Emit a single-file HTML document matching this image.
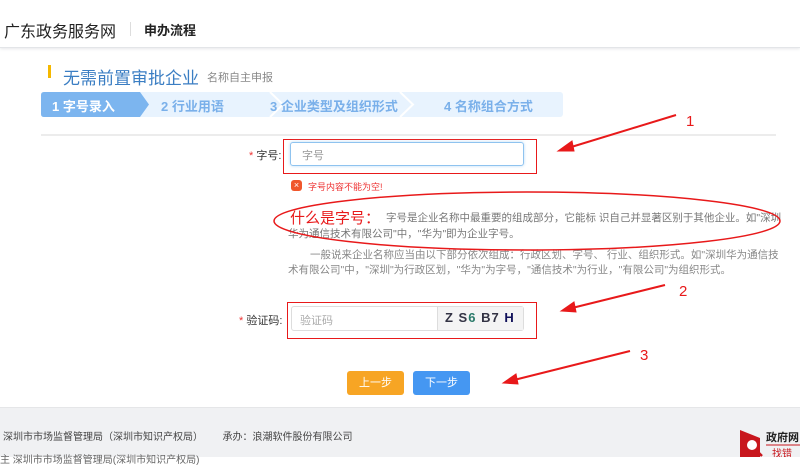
<!DOCTYPE html>
<html><head><meta charset="utf-8"><style>
*{margin:0;padding:0;box-sizing:border-box}
body{width:800px;height:457px;overflow:hidden;background:#fff;font-family:"Liberation Sans","Noto Sans CJK SC",sans-serif;position:relative;color:#333}
.a{position:absolute;white-space:nowrap}
</style></head><body>
<div class="a" style="left:0;top:0;width:800px;height:48px;background:#fff;border-bottom:1px solid #e3e5e8;box-shadow:0 1px 3px #e6e8ea"></div>
<div class="a" style="left:4px;top:18px;font-size:16px;color:#222">广东政务服务网</div>
<div class="a" style="left:130px;top:22px;width:1px;height:14px;background:#ddd"></div>
<div class="a" style="left:144px;top:20px;font-size:13px;font-weight:bold;color:#222">申办流程</div>
<div class="a" style="left:48px;top:65px;width:3px;height:13px;background:#f5b800"></div>
<div class="a" style="left:63px;top:64px;font-size:17px;color:#3b7ec3">无需前置审批企业</div>
<div class="a" style="left:207px;top:69px;font-size:11px;color:#888">名称自主申报</div>
<svg class="a" style="left:41px;top:92px" width="523" height="26">
<rect x="0" y="0" width="522" height="25" rx="3" fill="#e8f3fe"/>
<polyline points="229,0 242,12.5 229,25" fill="none" stroke="#fff" stroke-width="2"/>
<polyline points="359,0 372,12.5 359,25" fill="none" stroke="#fff" stroke-width="2"/>
<path d="M3,0 H99 L108,12.5 L99,25 H3 Q0,25 0,22 V3 Q0,0 3,0Z" fill="#7cb5ef"/>
</svg>
<div class="a" style="left:52px;top:96px;font-size:13px;font-weight:bold;color:#fff">1 字号录入</div>
<div class="a" style="left:161px;top:96px;font-size:13px;font-weight:bold;color:#7ab0ea">2 行业用语</div>
<div class="a" style="left:270px;top:96px;font-size:13px;font-weight:bold;color:#7ab0ea">3 企业类型及组织形式</div>
<div class="a" style="left:444px;top:96px;font-size:13px;font-weight:bold;color:#7ab0ea">4 名称组合方式</div>
<div class="a" style="left:41px;top:134px;width:735px;height:2px;background:#ececec"></div>
<div class="a" style="left:249px;top:147px;font-size:11px;color:#333"><span style="color:#e33">* </span>字号:</div>
<div class="a" style="left:283px;top:139px;width:254px;height:35px;border:1.5px solid #e8191a"></div>
<div class="a" style="left:290px;top:142px;width:234px;height:24px;border:1px solid #8fc3ef;border-radius:3px;box-shadow:0 0 3px #bcdcf6"></div>
<div class="a" style="left:302px;top:147px;font-size:11px;color:#999">字号</div>
<div class="a" style="left:291px;top:180px;width:11px;height:11px;border-radius:3px;background:#f0572c;color:#fff;font-size:9px;line-height:11px;text-align:center">×</div>
<div class="a" style="left:308px;top:180px;font-size:9px;color:#e33">字号内容不能为空!</div>
<div class="a" style="left:290px;top:207px;font-size:15px;color:#e8191a">什么是字号：</div>
<div class="a" style="left:386px;top:210px;font-size:10.5px;color:#777">字号是企业名称中最重要的组成部分，它能标 识自己并显著区别于其他企业。如"深圳</div>
<div class="a" style="left:288px;top:226px;font-size:10.5px;color:#777">华为通信技术有限公司"中，"华为"即为企业字号。</div>
<div class="a" style="left:310px;top:247px;font-size:10.5px;color:#888">一般说来企业名称应当由以下部分依次组成：行政区划、字号、 行业、组织形式。如"深圳华为通信技</div>
<div class="a" style="left:288px;top:262px;font-size:10.5px;color:#888">术有限公司"中，"深圳"为行政区划，"华为"为字号，"通信技术"为行业，"有限公司"为组织形式。</div>
<svg class="a" style="left:0;top:0" width="800" height="457">
<ellipse cx="527" cy="221" rx="253" ry="29" fill="none" stroke="#e8191a" stroke-width="1.5"/>
<g stroke="#e8191a" fill="#e8191a">
<line x1="676" y1="115" x2="568" y2="148" stroke-width="2"/><polygon points="558,151 572,141 574,151" />
<line x1="665" y1="285" x2="572" y2="308" stroke-width="2"/><polygon points="561,311 574,302 576,312"/>
<line x1="630" y1="351" x2="514" y2="380" stroke-width="2"/><polygon points="503,383 516,374 518,384"/>
</g>
<g fill="#e8191a" font-family="Liberation Sans" font-size="15"><text x="686" y="126">1</text><text x="679" y="296">2</text><text x="640" y="360">3</text></g>
</svg>
<div class="a" style="left:239px;top:312px;font-size:11px;color:#333"><span style="color:#e33">* </span>验证码:</div>
<div class="a" style="left:287px;top:302px;width:250px;height:37px;border:1.5px solid #e8191a"></div>
<div class="a" style="left:291px;top:306px;width:233px;height:25px;border:1px solid #ddd;border-radius:3px"></div>
<div class="a" style="left:300px;top:312px;font-size:11px;color:#aaa">验证码</div>
<div class="a" style="left:437px;top:307px;width:86px;height:23px;background:#f4f4f4;border-left:1px solid #ddd"></div>
<div class="a" style="left:445px;top:310px;font-size:13px;font-weight:bold;color:#334;letter-spacing:1px">Z S<span style="color:#2a7a6a">6</span> B7 <span style="color:#11115a">H</span></div>
<div class="a" style="left:347px;top:371px;width:57px;height:24px;background:#f7a524;border-radius:3px;color:#fff;font-size:11px;text-align:center;line-height:24px">上一步</div>
<div class="a" style="left:413px;top:371px;width:57px;height:24px;background:#4597f2;border-radius:3px;color:#fff;font-size:11px;text-align:center;line-height:24px">下一步</div>
<div class="a" style="left:0;top:407px;width:800px;height:50px;background:#f0f1f3;border-top:1px solid #e5e6e8"></div>
<div class="a" style="left:3px;top:428px;font-size:10px;color:#444">深圳市市场监督管理局（深圳市知识产权局）&nbsp;&nbsp;&nbsp;&nbsp;&nbsp;&nbsp;&nbsp;承办：浪潮软件股份有限公司</div>
<div class="a" style="left:0;top:451px;font-size:10px;color:#666">主 深圳市市场监督管理局(深圳市知识产权局)</div>
<svg class="a" style="left:738px;top:428px" width="62" height="29">
<polygon points="2,2 22,10 22,29 2,29" fill="#c8161d"/>
<circle cx="14" cy="17" r="6" fill="#fff" stroke="#c8161d" stroke-width="2"/>
<line x1="18" y1="22" x2="24" y2="28" stroke="#c8161d" stroke-width="2.5"/>
<text x="28" y="13" font-size="11" font-weight="bold" fill="#222" font-family="Noto Sans CJK SC">政府网</text>
<line x1="28" y1="17" x2="62" y2="17" stroke="#c8161d"/>
<text x="34" y="29" font-size="10" fill="#c8161d" font-family="Noto Sans CJK SC">找错</text>
</svg>
</body></html>
